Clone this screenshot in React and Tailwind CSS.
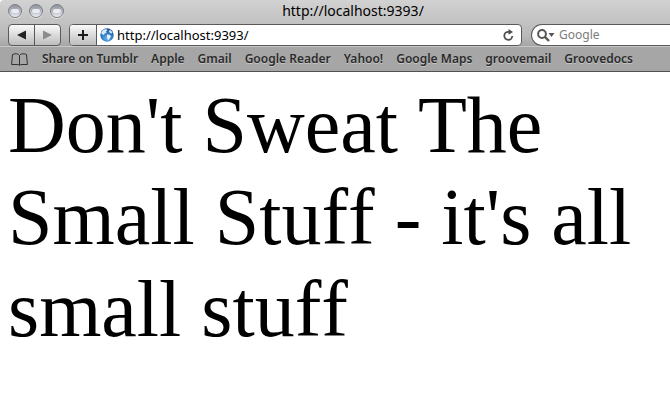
import React from "react";

const bookmarks = [
  "Share on Tumblr",
  "Apple",
  "Gmail",
  "Google Reader",
  "Yahoo!",
  "Google Maps",
  "groovemail",
  "Groovedocs",
];

function WindowButton({ label }) {
  return (
    <button
      type="button"
      aria-label={label}
      className="h-3.5 w-3.5 rounded-full border border-[#7c7e86] bg-linear-to-b from-[#8f939d] via-[#b4b8c2] to-[#eceef3] shadow-[0_1px_0_#e0e0e0]"
    >
      <span className="mx-auto -mt-px block h-1 w-2 rounded-full bg-[#e9ebf0]" />
    </button>
  );
}

function Globe() {
  return (
    <svg width="14" height="14" viewBox="0 0 14 14" className="shrink-0" aria-hidden="true">
      <defs>
        <radialGradient id="sea" cx="50%" cy="75%" r="70%">
          <stop offset="0" stopColor="#6db4ec" />
          <stop offset="0.6" stopColor="#2f77c0" />
          <stop offset="1" stopColor="#1d4f94" />
        </radialGradient>
      </defs>
      <circle cx="7" cy="7" r="6.7" fill="url(#sea)" />
      <path d="M1 5 L3 2 L6 1 L7.5 2 L6 3.5 L6.5 5 L4.5 5.5 L4 7 L2.5 6.5 Z" fill="#d9ecfb" />
      <path d="M7 6.5 L10 7 L11 8.5 L9.5 10.5 L8.5 12.5 L7.5 11 L7 9 Z" fill="#e4f3fd" />
      <path d="M9.5 2 L11 2.5 L12.5 4.5 L11.5 5.5 L10 5 L9 3.5 Z" fill="#cfe6f8" />
    </svg>
  );
}

export default function App() {
  return (
    <div className="min-h-screen bg-white font-['Noto_Sans','Open_Sans',sans-serif]">
      <header className="overflow-hidden rounded-tl-[4px] border-b border-[#515151] bg-linear-to-b from-[#d2d2d2] via-[#b9b9b9] to-[#a6a6a6] to-65%">
        <div className="flex h-6 items-center px-2 pb-0.5">
          <div className="flex flex-1 gap-[7px]">
            <WindowButton label="Close" />
            <WindowButton label="Minimize" />
            <WindowButton label="Zoom" />
          </div>
          <h1 className="pl-9 text-[14px] leading-4 text-black">http://localhost:9393/</h1>
          <div className="flex-1" />
        </div>

        <div className="flex h-[22px] items-stretch pl-2">
          <div className="flex w-[53px] overflow-hidden rounded-[4px] border border-[#5a5a5a] bg-linear-to-b from-[#fafafa] to-[#bdbdbd]">
            <button type="button" aria-label="Back" className="flex flex-1 items-center justify-center border-r border-[#5a5a5a]">
              <svg width="9" height="10" viewBox="0 0 9 10" aria-hidden="true">
                <path d="M0 5 L9 0.5 V9.5 Z" fill="#222" />
              </svg>
            </button>
            <button type="button" aria-label="Forward" className="flex flex-1 items-center justify-center">
              <svg width="9" height="10" viewBox="0 0 9 10" aria-hidden="true">
                <path d="M9 5 L0 0.5 V9.5 Z" fill="#8b8b8b" />
              </svg>
            </button>
          </div>

          <div className="ml-2 flex min-w-0 flex-1 overflow-hidden rounded-[4px] border border-[#5a5a5a] bg-white">
            <button
              type="button"
              aria-label="Add bookmark"
              className="flex w-[27px] items-center justify-center border-r border-[#5a5a5a] bg-linear-to-b from-[#fafafa] to-[#bdbdbd]"
            >
              <svg width="10" height="10" viewBox="0 0 10 10" aria-hidden="true">
                <path d="M5 0 V10 M0 5 H10" stroke="#1c1c1c" strokeWidth="2" />
              </svg>
            </button>
            <div className="flex min-w-0 flex-1 items-center gap-[3px] pr-[7px] pl-[3px]">
              <Globe />
              <input
                type="text"
                aria-label="Address"
                defaultValue="http://localhost:9393/"
                className="min-w-0 flex-1 bg-transparent text-[13px] leading-4 text-black outline-none"
              />
              <button type="button" aria-label="Reload">
                <svg width="11" height="12" viewBox="0 0 11 12" aria-hidden="true">
                  <path d="M6.5 2.8 H5.3 A4 4 0 1 0 9.3 7" fill="none" stroke="#4f4f4f" strokeWidth="1.8" />
                  <path d="M5.5 0 L10 2.9 L5.5 5.8 Z" fill="#4f4f4f" />
                </svg>
              </button>
            </div>
          </div>

          <div className="ml-[9px] flex w-[139px] items-center rounded-l-full border border-r-0 border-[#5a5a5a] bg-white pl-[5px]">
            <svg width="18" height="13" viewBox="0 0 18 13" className="shrink-0" aria-hidden="true">
              <circle cx="5" cy="5" r="3.9" fill="none" stroke="#565656" strokeWidth="2" />
              <path d="M8 8 L12 12" stroke="#565656" strokeWidth="2.4" />
              <path d="M11.5 4 H17.5 L14.5 8 Z" fill="#565656" />
            </svg>
            <input
              type="search"
              aria-label="Search Google"
              placeholder="Google"
              className="ml-1 min-w-0 flex-1 bg-transparent text-[12px] leading-4 outline-none placeholder:text-[#7c7c7c]"
            />
          </div>
        </div>

        <nav aria-label="Bookmarks" className="flex h-[25px] items-center border-t border-[#c6c6c6] pl-[11px]">
          <button type="button" aria-label="Show all bookmarks">
            <svg width="17" height="13" viewBox="0 0 17 13" fill="none" stroke="#303030" aria-hidden="true">
              <path d="M8.5 2.5 C7.5 0.5 4 0.3 1.5 1.5 L0.6 11.5 H6 C7.3 11.5 8 11.8 8.5 12.4 C9 11.8 9.7 11.5 11 11.5 H16.4 L15.5 1.5 C13 0.3 9.5 0.5 8.5 2.5 V12" />
            </svg>
          </button>
          <ul className="ml-3.5 flex gap-[13px] whitespace-nowrap">
            {bookmarks.map((name) => (
              <li key={name} className="flex">
                <a href="#" className="text-[12px] leading-4 font-semibold text-[#2b2b2b] [text-shadow:0_1px_0_#c4c4c4]">
                  {name}
                </a>
              </li>
            ))}
          </ul>
        </nav>
      </header>

      <main className="px-2 pt-[7px] pb-2 font-['Liberation_Serif','Times_New_Roman',serif] text-[80px] leading-[92px] text-black [font-kerning:none] [font-variant-ligatures:none]">
        <p>Don't Sweat The Small Stuff - it's all small stuff</p>
      </main>
    </div>
  );
}
